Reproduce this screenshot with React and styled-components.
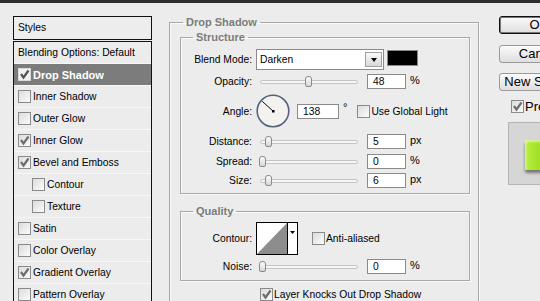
import React from "react"
import styled, { createGlobalStyle } from "styled-components"

const GlobalStyle = createGlobalStyle`
    html, body {
        margin: 0;
        padding: 0;
        background: #ececec;
        overflow: hidden;
    }
    body {
        font-family: "Liberation Sans", Arial, sans-serif;
        font-size: 10.3px;
        color: #000;
    }
`

const Window = styled.div`
    width: 540px;
    height: 301px;
    overflow: hidden;
    background: #ececec;
`

const TopEdge = styled.div`
    height: 3px;
    background: #2e2e2e;
`

const Body = styled.div`
    display: flex;
    align-items: flex-start;
    padding-left: 13px;
`

/* ---------- styles list ---------- */

const StylesPanel = styled.div`
    width: 139px;
    flex: none;
    margin-top: 13px;
    display: flex;
    flex-direction: column;
`

const StylesHeader = styled.div`
    height: 22px;
    line-height: 22px;
    padding-left: 4px;
    border: 1px solid #111;
    background: #ededed;
`

const StyleList = styled.div`
    margin-top: 1px;
    border: 1px solid #111;
    border-bottom: none;
    height: 300px;
    background: #ececec;
`

const StyleRow = styled.div`
    height: 21px;
    display: flex;
    align-items: center;
    gap: 2px;
    padding-left: ${p => (p.sub ? 18 : 4)}px;
    border-bottom: 1px solid #f7f7f7;
    background: ${p => (p.selected ? "#7c7c7c" : "transparent")};
    color: ${p => (p.selected ? "#fff" : "#000")};
    font-weight: ${p => (p.selected ? "bold" : "normal")};
    font-size: ${p => (p.selected ? "11px" : "inherit")};
    white-space: nowrap;
    overflow: hidden;
`

const Box = styled.span`
    width: 11px;
    height: 11px;
    flex: none;
    display: inline-flex;
    align-items: center;
    justify-content: center;
    border: 1px solid ${p => (p.light ? "#d8d8d8" : "#8a8a8a")};
    background: ${p => (p.light ? "#f2f2f2" : "linear-gradient(135deg, #dcdcdc, #fbfbfb)")};
`

const Check = ({ checked, light }) => (
    <Box light={light}>
        {checked && (
            <svg width="11" height="11" viewBox="0 0 11 11">
                <polyline points="2,5 4.5,8.5 9.5,1.5" fill="none" stroke={light ? "#555" : "#6e6e6e"} strokeWidth="2.2" />
            </svg>
        )}
    </Box>
)

/* ---------- group boxes ---------- */

const Main = styled.div`
    margin-left: 17px;
    margin-top: 13px;
    width: 310px;
    flex: none;
`

const Group = styled.fieldset`
    margin: 0;
    min-width: 0;
    border: 1px solid #a8a8a8;
    box-shadow: inset 1px 1px 0 #fafafa, 1px 1px 0 #fafafa;
    padding: ${p => p.pad};
    margin-top: ${p => p.top || 0}px;
    height: ${p => (p.tall ? "400px" : "auto")};
    box-sizing: border-box;
`

const Legend = styled.legend`
    margin-left: ${p => p.offset}px;
    padding: 0 3px;
    line-height: 13px;
    font-size: 11px;
    font-weight: bold;
    color: #7b7b7b;
`

const Row = styled.div`
    display: flex;
    align-items: center;
    height: ${p => p.h}px;
    margin-top: ${p => p.top || 0}px;
`

const Label = styled.span`
    width: 71px;
    margin-right: 4px;
    text-align: right;
    flex: none;
    white-space: nowrap;
`

const Select = styled.div`
    width: 126px;
    height: 19px;
    display: flex;
    align-items: center;
    border: 1px solid #8a8a8a;
    background: #fff;
`

const SelectText = styled.span`
    flex: 1;
    padding-left: 3px;
`

const SelectArrow = styled.span`
    width: 15px;
    height: 13px;
    margin-right: 1px;
    display: flex;
    align-items: center;
    justify-content: center;
    border: 1px solid #a0a0a0;
    background: linear-gradient(#fafafa, #d8d8d8);

    &::after {
        content: "";
        border-left: 3px solid transparent;
        border-right: 3px solid transparent;
        border-top: 4px solid #000;
    }
`

const Swatch = styled.span`
    width: 29px;
    height: 14px;
    margin-left: 3px;
    margin-top: -3px;
    border: 1px solid #8a8a8a;
    background: #000;
`

const Slider = styled.div`
    position: relative;
    width: 111px;
    height: 15px;
    flex: none;
`

const Track = styled.span`
    position: absolute;
    left: 4px;
    top: 6px;
    width: 96px;
    height: 2px;
    border: 1px solid #c4c4c4;
    border-radius: 2px;
    background: #f6f6f6;
`

const Thumb = styled.span`
    position: absolute;
    top: 2px;
    width: 5px;
    height: 9px;
    margin-left: -3px;
    border: 1px solid #8a8a8a;
    border-radius: 3px 3px 2px 2px;
    background: linear-gradient(#fdfdfd, #d6d6d6);
`

const Field = styled.div`
    width: ${p => p.w || 32}px;
    height: 13px;
    line-height: 13px;
    padding-left: 5px;
    box-sizing: content-box;
    border: 1px solid #8a8a8a;
    background: #fff;
    flex: none;
`

const Unit = styled.span`
    margin-left: 4px;
    margin-top: ${p => (p.raise ? -8 : -3)}px;
    line-height: 12px;
    font-size: 11px;
`

const CheckLabel = styled.label`
    display: flex;
    align-items: center;
    gap: 1px;
    margin-left: ${p => p.left}px;
    white-space: nowrap;
`

const SliderRow = ({ label, value, frac, unit, top }) => (
    <Row h={15} top={top}>
        <Label>{label}</Label>
        <Slider>
            <Track />
            <Thumb style={{ left: 6 + frac * 96 }} />
        </Slider>
        <Field>{value}</Field>
        <Unit>{unit}</Unit>
    </Row>
)

const Dial = () => (
    <svg width="34" height="34" viewBox="0 0 34 34">
        <circle cx="17" cy="17" r="15.8" fill="#f4f2ee" stroke="#55627e" strokeWidth="1.6" />
        <line x1="17" y1="17" x2="6.2" y2="7.3" stroke="#111" strokeWidth="1" />
        <rect x="16" y="16" width="2.5" height="2.5" fill="#000" />
    </svg>
)

const ContourPicker = () => (
    <svg width="42" height="33" viewBox="0 0 42 33">
        <rect x="0.5" y="0.5" width="31" height="32" fill="#fff" stroke="#000" />
        <polygon points="1,32 31,1 31,32" fill="#8d8d8d" />
        <rect x="31.5" y="0.5" width="10" height="32" fill="#fff" stroke="#000" />
        <polygon points="34,9 39,9 36.5,12" fill="#000" />
    </svg>
)

/* ---------- right column ---------- */

const Side = styled.div`
    margin-left: 20px;
    margin-top: 13px;
    width: 100px;
    display: flex;
    flex-direction: column;
    flex: none;
`

const Button = styled.div`
    width: 78px;
    height: 16px;
    margin-top: ${p => p.top || 0}px;
    line-height: 16px;
    text-align: center;
    font-size: 13px;
    border: 1px solid ${p => (p.primary ? "#111" : "#9a9a9a")};
    box-shadow: ${p => (p.primary ? "inset 0 0 0 1px #777" : "none")};
    border-radius: 3px;
    background: linear-gradient(#fbfbfb, #dedede);
    white-space: nowrap;
`

const PreviewCheck = styled.label`
    display: flex;
    align-items: center;
    gap: 1px;
    margin: 8px 0 0 12px;
    font-size: 13px;
`

const PreviewBox = styled.div`
    margin: 8px 0 0 9px;
    width: 80px;
    height: 63px;
    border: 1px solid #b4b4b4;
    background: #d6d6d6;
    padding: 17px 0 0 16px;
    box-sizing: border-box;
`

const GreenSwatch = styled.div`
    width: 40px;
    height: 30px;
    border-radius: 2px 0 0 2px;
    background: linear-gradient(90deg, #d4f57a 0, #b4ec3c 3px, #9fdf22 40%, #8fd51a 100%);
    box-shadow: 0 3px 3px rgba(0, 0, 0, 0.45), inset 0 2px 2px rgba(255, 255, 255, 0.5);
`

const styleRows = [
    { name: "Drop Shadow", checked: true, selected: true },
    { name: "Inner Shadow" },
    { name: "Outer Glow" },
    { name: "Inner Glow", checked: true },
    { name: "Bevel and Emboss", checked: true },
    { name: "Contour", sub: true },
    { name: "Texture", sub: true },
    { name: "Satin" },
    { name: "Color Overlay" },
    { name: "Gradient Overlay", checked: true },
    { name: "Pattern Overlay" },
]

const App = () => (
    <Window>
        <GlobalStyle />
        <TopEdge />
        <Body>
            <StylesPanel>
                <StylesHeader>Styles</StylesHeader>
                <StyleList>
                    <StyleRow>Blending Options: Default</StyleRow>
                    {styleRows.map(r => (
                        <StyleRow key={r.name} sub={r.sub} selected={r.selected}>
                            <Check checked={r.checked} light={r.selected} />
                            {r.name}
                        </StyleRow>
                    ))}
                </StyleList>
            </StylesPanel>

            <Main>
                <Group pad="2px 8px 0 10px" tall>
                    <Legend offset={3}>Drop Shadow</Legend>

                    <Group pad="5px 0 5px 0">
                        <Legend offset={12}>Structure</Legend>
                        <Row h={21}>
                            <Label>Blend Mode:</Label>
                            <Select>
                                <SelectText>Darken</SelectText>
                                <SelectArrow />
                            </Select>
                            <Swatch />
                        </Row>
                        <SliderRow label="Opacity:" value="48" frac={0.48} unit="%" top={4} />
                        <Row h={34} top={5}>
                            <Label>Angle:</Label>
                            <Dial />
                            <Field w={35} style={{ marginLeft: 7 }}>138</Field>
                            <Unit raise>°</Unit>
                            <CheckLabel left={10}>
                                <Check />
                                Use Global Light
                            </CheckLabel>
                        </Row>
                        <SliderRow label="Distance:" value="5" frac={0.065} unit="px" top={6} />
                        <SliderRow label="Spread:" value="0" frac={0} unit="%" top={5} />
                        <SliderRow label="Size:" value="6" frac={0.065} unit="px" top={4} />
                    </Group>

                    <Group pad="4px 0 6px 0" top={11}>
                        <Legend offset={12}>Quality</Legend>
                        <Row h={33}>
                            <Label>Contour:</Label>
                            <ContourPicker />
                            <CheckLabel left={14}>
                                <Check />
                                Anti-aliased
                            </CheckLabel>
                        </Row>
                        <SliderRow label="Noise:" value="0" frac={0} unit="%" top={4} />
                    </Group>

                    <Row h={13} top={7}>
                        <CheckLabel left={80}>
                            <Check checked />
                            Layer Knocks Out Drop Shadow
                        </CheckLabel>
                    </Row>
                </Group>
            </Main>

            <Side>
                <Button primary>OK</Button>
                <Button top={11}>Cancel</Button>
                <Button top={10}>New Style...</Button>
                <PreviewCheck>
                    <Check checked />
                    Preview
                </PreviewCheck>
                <PreviewBox>
                    <GreenSwatch />
                </PreviewBox>
            </Side>
        </Body>
    </Window>
)

export default App
